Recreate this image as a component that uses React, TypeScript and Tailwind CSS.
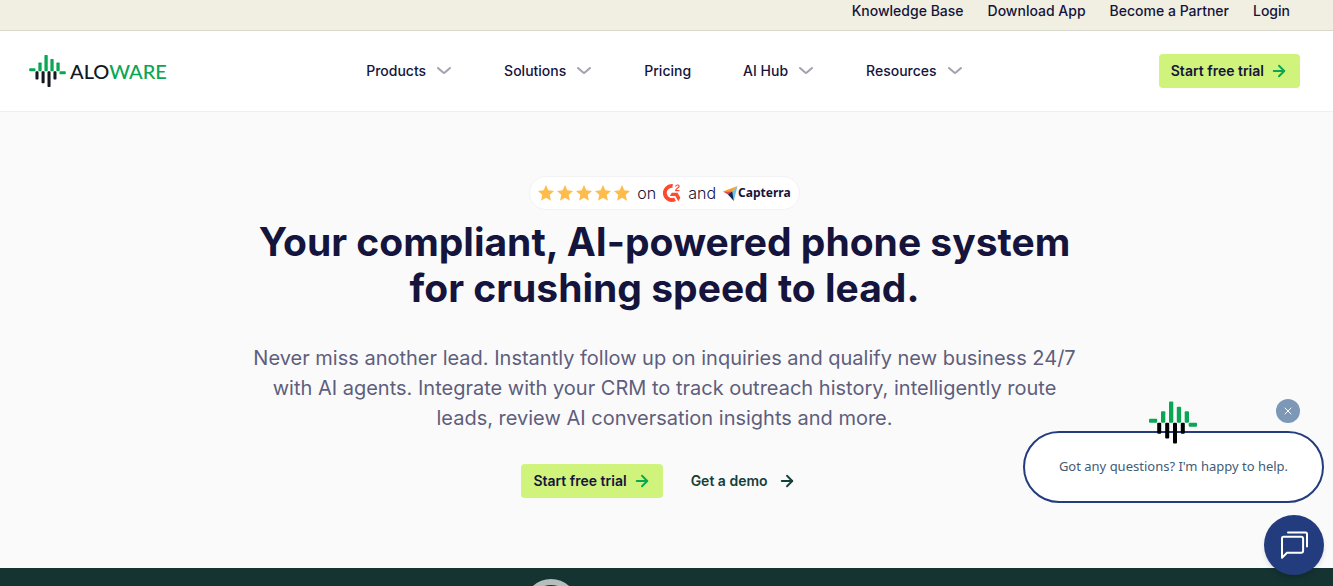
import { ArrowRight, X } from "lucide-react";

const topLinks = ["Knowledge Base", "Download App", "Become a Partner", "Login"];

const navItems = [
  { label: "Products", menu: true },
  { label: "Solutions", menu: true },
  { label: "Pricing", menu: false },
  { label: "AI Hub", menu: true },
  { label: "Resources", menu: true },
];

function LogoMark({ className, dark }: { className: string; dark: string }) {
  return (
    <svg viewBox="0 0 48 42" className={className} aria-hidden="true">
      <g fill="#09a653">
        <rect x="0" y="17.3" width="8.2" height="4" rx="1" />
        <rect x="12" y="9.7" width="4.3" height="11.6" rx="1" />
        <rect x="20" y="0" width="4.3" height="21.3" rx="1" />
        <rect x="27.8" y="5.3" width="4.3" height="16" rx="1" />
        <rect x="35.7" y="9.7" width="4.3" height="11.6" rx="1" />
        <rect x="39.7" y="21.3" width="8.3" height="4" rx="1" />
      </g>
      <g fill={dark}>
        <rect x="8.2" y="21.3" width="4" height="11" rx="1" />
        <rect x="16.2" y="21.3" width="4" height="15.8" rx="1" />
        <rect x="24" y="21.3" width="4" height="20.7" rx="1" />
        <rect x="31.8" y="21.3" width="4" height="11" rx="1" />
      </g>
    </svg>
  );
}

function Chevron() {
  return (
    <svg viewBox="0 0 16 16" className="h-4 w-4" fill="none" stroke="#a1a1b1" strokeWidth="2" strokeLinecap="round" aria-hidden="true">
      <path d="M2 5l5.200 4.600a1.200 1.200 0 0 0 1.600 0L14 5" />
    </svg>
  );
}

function Star() {
  return (
    <svg viewBox="0 0 24 24" className="h-4 w-4" fill="#fdbc4b" aria-hidden="true">
      <path d="M12 0l3.5 8 8.5.9-6.4 5.7 1.8 8.9L12 19l-7.4 4.5 1.8-8.9L0 8.900 8.500 8z" />
    </svg>
  );
}

function G2Logo() {
  return (
    <svg viewBox="0 0 18 18" className="h-[18px] w-[18px]" role="img" aria-label="G2">
      <path
        d="M10.200 2A7 7 0 1 0 12.600 15.200"
        transform="translate(-.6 0)"
        fill="none"
        stroke="#ff492c"
        strokeWidth="3.800"
      />
      <path d="M8.700 8.800h5.800l2.900 5-2.100 3.400-3-5.200H6.900z" fill="#ff492c" />
      <path
        d="M12.600 2.500c.3-1.900 3.500-2 3.500-.1 0 1.600-3.200 1.900-3.500 4.300h3.900"
        fill="none"
        stroke="#ff492c"
        strokeWidth="1.200"
      />
    </svg>
  );
}

function CapterraMark() {
  return (
    <svg viewBox="0 0 15 15" className="h-[15px] w-[15px]" aria-hidden="true">
      <path d="M0 5.600L9.300 5.300 14.500 0z" fill="#ff9d28" />
      <path d="M9.300 5.300L14.500 0 10.800 15z" fill="#68c5ed" />
      <path d="M0 5.600l9.300-.3-4 3.400z" fill="#e54747" />
      <path d="M5 8.400l4.300-3.100 1.500 9.700z" fill="#142a52" />
    </svg>
  );
}

function TrialButton() {
  return (
    <button
      type="button"
      className="flex h-[34px] items-center gap-1.5 rounded bg-[#d0f37b] px-3 text-sm font-semibold whitespace-nowrap text-[#14143c]"
    >
      Start free trial
      <ArrowRight className="h-[18px] w-[18px] text-[#09a653]" strokeWidth={2.5} />
    </button>
  );
}

function ChatWidget() {
  return (
    <aside className="absolute right-[9px] bottom-[11px] flex flex-col items-end">
      <button
        type="button"
        aria-label="Close message"
        className="mr-6 mb-2 flex h-6 w-6 items-center justify-center rounded-full bg-[#7c98b6] text-white"
      >
        <X className="h-3 w-3" strokeWidth={2} />
      </button>
      <div className="relative flex h-[72px] w-[301px] items-center justify-center rounded-full border-2 border-[#233c7e] bg-white">
        <LogoMark className="absolute -top-8 right-[125px] h-[43px] w-12" dark="#000000" />
        <p className="font-['Noto_Sans',sans-serif] text-[13px] text-[#425b76]">
          Got any questions? I'm happy to help.
        </p>
      </div>
      <button
        type="button"
        aria-label="Open chat"
        className="mt-3 flex h-[60px] w-[60px] items-center justify-center rounded-full bg-[#233c7e] shadow-md"
      >
        <svg viewBox="0 0 28 28" className="h-7 w-7" fill="none" stroke="#ffffff" strokeWidth="2" strokeLinejoin="round" strokeLinecap="round">
          <path d="M3.500 5.700h17.600a2 2 0 0 1 2 2v12a2 2 0 0 1-2 2H7l-5 5V7.200a1.500 1.500 0 0 1 1.500-1.500z" />
          <path d="M8 1.500h17.500a1.500 1.500 0 0 1 1.500 1.500v12.500" />
        </svg>
      </button>
    </aside>
  );
}

export default function App() {
  return (
    <div className="relative flex min-h-screen flex-col overflow-hidden bg-[#fafafa] font-['Inter',sans-serif] text-[#14143c]">
      {/* Utility links */}
      <div className="flex h-[31px] justify-end gap-6 border-b border-[#d8d8cd] bg-[#f0efe2] pr-[43px] text-sm leading-[22px] font-medium">
        {topLinks.map((link) => (
          <a key={link} href="#">
            {link}
          </a>
        ))}
      </div>

      {/* Main navigation */}
      <header className="flex h-[81px] items-center justify-between border-b border-[#efefef] bg-white pr-[33px] pl-[29px]">
        <a href="#" className="flex w-[141px] items-center gap-1">
          <LogoMark className="h-8 w-[37px] shrink-0" dark="#14181f" />
          <span className="font-['Lato',sans-serif] text-xl font-medium text-[#14181f]">
            ALO<span className="text-[#09a653]">WARE</span>
          </span>
        </a>
        <nav className="flex items-center gap-[52px] text-sm font-medium">
          {navItems.map((item) =>
            item.menu ? (
              <button key={item.label} type="button" className="flex items-center gap-2.5">
                {item.label}
                <Chevron />
              </button>
            ) : (
              <a key={item.label} href="#">
                {item.label}
              </a>
            ),
          )}
        </nav>
        <TrialButton />
      </header>

      {/* Hero */}
      <main className="flex flex-col items-center pt-16 pr-1 pb-[70px] text-center">
        <div className="flex h-[34px] items-center gap-[7px] rounded-full border border-[#f2f2f4] bg-white px-2">
          <span className="flex gap-[3px]" role="img" aria-label="Five stars">
            <Star />
            <Star />
            <Star />
            <Star />
            <Star />
          </span>
          <span className="font-light">on</span>
          <G2Logo />
          <span className="font-light">and</span>
          <span className="flex items-center font-['Noto_Sans',sans-serif] text-xs font-bold">
            <CapterraMark />
            Capterra
          </span>
        </div>

        <h1 className="mt-[9px] text-[39px] leading-[46px] font-bold">
          Your compliant, AI-powered phone system
          <br />
          for crushing speed to lead.
        </h1>

        <p className="mt-8 text-xl leading-[30px] text-[#5e5e7d]">
          Never miss another lead. Instantly follow up on inquiries and qualify new business 24/7
          <br />
          with AI agents. Integrate with your CRM to track outreach history, intelligently route
          <br />
          leads, review AI conversation insights and more.
        </p>

        <div className="mt-[31px] flex items-center gap-4">
          <TrialButton />
          <a href="#" className="flex items-center gap-2.5 px-3 text-sm font-semibold text-[#14403c]">
            Get a demo
            <ArrowRight className="h-[18px] w-[18px]" strokeWidth={2.5} />
          </a>
        </div>
      </main>

      {/* Video band */}
      <section className="relative flex-1 overflow-hidden bg-[#143331]">
        <div className="absolute top-[11px] left-1/2 -ml-[143px] h-[54px] w-[54px] rounded-full border-[6px] border-[#b4bebd]" />
      </section>

      <ChatWidget />
    </div>
  );
}
